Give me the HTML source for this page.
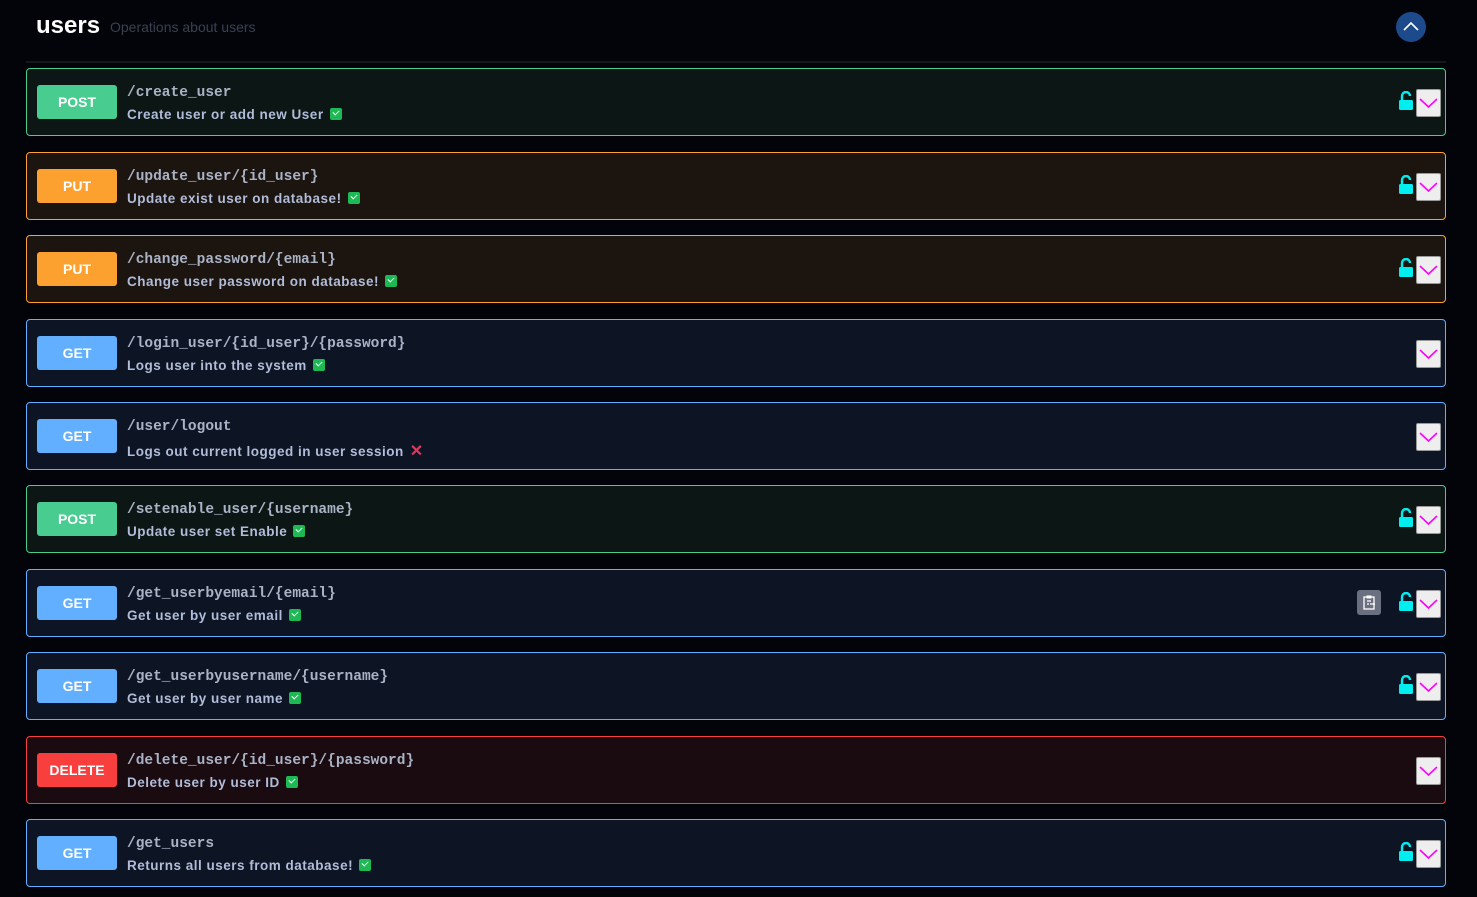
<!DOCTYPE html>
<html><head><style>
body{margin:0;background:#03040a;width:1477px;height:897px;overflow:hidden;font-family:"Liberation Sans",sans-serif;position:relative}
.h{position:absolute;left:36px;top:12px;color:#fff;font-weight:bold;font-size:24px}
.sub{position:absolute;left:110px;top:19px;color:#3a4050;font-size:14px}
.up{position:absolute;left:1396px;top:12px;width:30px;height:30px;border-radius:50%;background:#1c4a8a}
.hr{position:absolute;left:26px;top:61px;width:1420px;height:2px;background:#15161c}
.op{position:absolute;left:26px;width:1418px;height:66px;border:1px solid;border-radius:4px}
.b{position:absolute;left:10px;top:16px;width:80px;height:34px;border-radius:3px;color:#fff;font-weight:bold;font-size:14px;text-align:center;line-height:34px}
.p{position:absolute;left:100px;top:16px;font-family:"Liberation Mono",monospace;font-size:14.5px;color:#aab3c5;font-weight:bold}
.d{position:absolute;left:100px;top:38px;font-size:13.5px;letter-spacing:0.5px;color:#b0bcd8;font-weight:bold}
.ck{display:inline-block;width:12px;height:12px;background:#1db954;border-radius:2px;vertical-align:-1px;margin-left:6px;position:relative}
.ck:after{content:"";position:absolute;left:3px;top:2px;width:5px;height:3px;border-left:1.5px solid #fff;border-bottom:1.5px solid #fff;transform:rotate(-45deg)}
.x{color:#e8335a;margin-left:6px;font-size:16px}
.chev{position:absolute;left:1389px;top:20px;width:23px;height:26px;background:#eee;border:1px solid #999;border-radius:2px}
.lock{position:absolute;left:1371px;top:22px}
.post{border-color:#49cc90;background:#0b1615}.post .b{background:#49cc90}
.put{border-color:#fca130;background:#1b140f}.put .b{background:#fca130}
.get{border-color:#61affe;background:#0d1424}.get .b{background:#61affe}
.del{border-color:#f93e3e;background:#1a0b10}.del .b{background:#f93e3e}
.clip{position:absolute;left:1330px;top:20px;width:24px;height:25px;background:#6b7080;border-radius:3px}
</style></head><body>
<div class="h">users</div><div class="sub">Operations about users</div>
<div class="up"><svg width="30" height="30"><path d="M8 18l7-7 7 7" stroke="#fff" stroke-width="1.6" fill="none"/></svg></div>
<div class="hr"></div>
<div id="c"></div>
<script>
const L='<svg class="lock" width="16" height="20" viewBox="0 0 16 20"><path d="M4 9V5a4 4 0 0 1 8 0" stroke="#00eef0" stroke-width="2.4" fill="none"/><rect x="1" y="9" width="14" height="10" rx="1.5" fill="#00eef0"/></svg>';
const C='<div class="chev"><svg width="23" height="26"><path d="M3 9l8.5 8 8.5-8" stroke="#f0f" stroke-width="1.6" fill="none"/></svg></div>';
const ops=[["post","POST","/create_user","Create user or add new User",1,1],
["put","PUT","/update_user/{id_user}","Update exist user on database!",1,1],
["put","PUT","/change_password/{email}","Change user password on database!",1,1],
["get","GET","/login_user/{id_user}/{password}","Logs user into the system",1,0],
["get","GET","/user/logout","Logs out current logged in user session",0,0],
["post","POST","/setenable_user/{username}","Update user set Enable",1,1],
["get","GET","/get_userbyemail/{email}","Get user by user email",1,2],
["get","GET","/get_userbyusername/{username}","Get user by user name",1,1],
["del","DELETE","/delete_user/{id_user}/{password}","Delete user by user ID",1,0],
["get","GET","/get_users","Returns all users from database!",1,1]];
const tops=[68,152,235,319,402,485,569,652,736,819];
let h='';ops.forEach((o,i)=>{h+=`<div class="op ${o[0]}" style="top:${tops[i]}px"><div class="b">${o[1]}</div><div class="p">${o[2]}</div><div class="d">${o[3]}${o[4]?'<span class="ck"></span>':'<span class="x">✕</span>'}</div>${o[5]==2?'<div class="clip"><svg width="24" height="25"><rect x="7" y="7" width="10" height="12" fill="none" stroke="#fff" stroke-width="1.3"/><rect x="9.5" y="5.5" width="5" height="3" fill="#fff"/><path d="M10 11h4M10 14h2M13 14h5" stroke="#fff" stroke-width="1.2"/></svg></div>':''}${o[5]?L:''}${C}</div>`});
document.getElementById('c').innerHTML=h;
</script>
</body></html>
